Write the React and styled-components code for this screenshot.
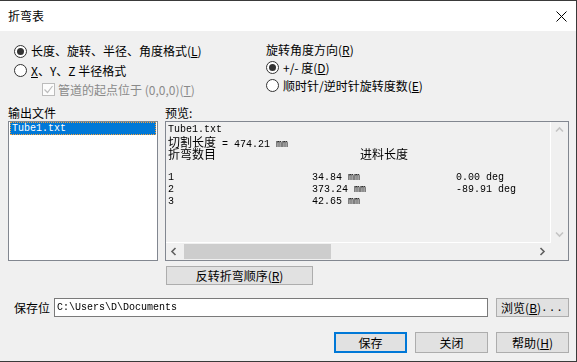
import React from "react";
import styled, { createGlobalStyle } from "styled-components";

const Global = createGlobalStyle`
  html, body { margin: 0; padding: 0; background: #ffffff; }
  body { font-family: "Noto Sans CJK SC", "Noto Sans", sans-serif; font-size: 12px; color: #000; }
  * { box-sizing: border-box; }
`;

const Window = styled.div`
  width: 577px;
  height: 362px;
  background: #f0f0f0;
  border-top: 1px solid #3a3a3a;
  border-right: 1px solid #3a3a3a;
  border-bottom: 1px solid #3a3a3a;
  display: flex;
  flex-direction: column;
  overflow: hidden;
`;

const TitleBar = styled.div`
  height: 30px;
  flex: none;
  background: #ffffff;
  display: flex;
  align-items: center;
  justify-content: space-between;
  padding: 0 9px 0 8px;
`;

const TitleText = styled.span`
  font-size: 12px;
  line-height: 14px;
`;

const Body = styled.div`
  flex: 1;
  display: flex;
  flex-direction: column;
  padding: 10px 7px 0 8px;
`;

const Options = styled.div`
  display: flex;
  margin-left: 6px;
  height: 58px;
`;

const OptionColumn = styled.div`
  display: flex;
  flex-direction: column;
  width: ${(p) => p.$w || "auto"};
  flex: none;
`;

const OptionRow = styled.div`
  height: ${(p) => p.$h}px;
  display: flex;
  align-items: center;
  gap: ${(p) => (p.$gap != null ? p.$gap : 4)}px;
  padding-left: ${(p) => p.$indent || 0}px;
  white-space: nowrap;
  line-height: 14px;
  color: ${(p) => (p.$disabled ? "#8a8a8a" : "#000")};
`;

const RadioMark = styled.span`
  flex: none;
  width: 13px;
  height: 13px;
  border-radius: 50%;
  border: 1px solid #333333;
  background: #ffffff;
  display: grid;
  place-items: center;
  &::after {
    content: "";
    width: 7px;
    height: 7px;
    border-radius: 50%;
    background: ${(p) => (p.$checked ? "#333333" : "transparent")};
  }
`;

const CheckMark = styled.span`
  flex: none;
  width: 13px;
  height: 13px;
  border: 1px solid #bcbcbc;
  background: #fcfcfc;
  display: grid;
  place-items: center;
`;

const Accel = styled.span`
  text-decoration: underline;
  text-underline-offset: 1px;
`;

const Panels = styled.div`
  display: grid;
  grid-template-columns: 150px 1fr;
  column-gap: 7px;
  margin-top: 5px;
`;

const PanelLabel = styled.div`
  height: 17px;
  line-height: 14px;
  display: flex;
  align-items: center;
`;

const ListBox = styled.div`
  height: 140px;
  border: 1px solid #828790;
  background: #ffffff;
  padding: 0 1px;
`;

const ListItem = styled.div`
  height: 13px;
  font-family: "Liberation Mono", monospace;
  font-size: 10px;
  line-height: 11px;
  padding-left: 1px;
  color: ${(p) => (p.$selected ? "#ffffff" : "#000")};
  background: ${(p) => (p.$selected ? "#0078d7" : "transparent")};
  border: 1px dotted ${(p) => (p.$selected ? "#f7a23c" : "transparent")};
`;

const PreviewBox = styled.div`
  height: 140px;
  border: 1px solid #828790;
  background: #f0f0f0;
  display: grid;
  grid-template-columns: 1fr 17px;
  grid-template-rows: 1fr 17px;
`;

const PreviewText = styled.div`
  border-right: 1px solid #ffffff;
  border-bottom: 1px solid #ffffff;
  padding: 2px 0 0 2px;
  overflow: hidden;
  font-family: "Liberation Mono", monospace;
  font-size: 10px;
  tab-size: 8;
  -moz-tab-size: 8;
  filter: grayscale(1);
`;

const Line = styled.div`
  height: 12px;
  line-height: 12px;
  white-space: pre;
`;

const Han = styled.span`
  font-family: "Noto Sans CJK SC", sans-serif;
  font-size: 12px;
  line-height: 12px;
`;

const VScroll = styled.div`
  display: flex;
  flex-direction: column;
  justify-content: space-between;
  background: #f0f0f0;
`;

const HScroll = styled.div`
  display: flex;
  align-items: stretch;
  background: #f0f0f0;
`;

const Arrow = styled.div`
  width: 17px;
  height: 17px;
  flex: none;
  display: grid;
  place-items: center;
`;

const Track = styled.div`
  flex: 1;
  display: flex;
  align-items: center;
  padding: 0 1px;
`;

const Thumb = styled.div`
  width: 147px;
  height: 15px;
  background: #cdcdcd;
`;

const Corner = styled.div`
  background: #f0f0f0;
`;

const Button = styled.button`
  width: ${(p) => p.$w}px;
  height: ${(p) => p.$h || 21}px;
  margin: 0;
  padding: 0;
  background: #e1e1e1;
  border: ${(p) => (p.$default ? "2px solid #0078d7" : "1px solid #adadad")};
  font-family: "Noto Sans CJK SC", sans-serif;
  font-size: 12px;
  line-height: 14px;
  color: #000;
  display: flex;
  align-items: center;
  justify-content: center;
  white-space: nowrap;
`;

const ReverseRow = styled.div`
  display: grid;
  grid-template-columns: 150px 1fr;
  column-gap: 7px;
  margin-top: 5px;
`;

const ReverseCell = styled.div`
  grid-column: 2;
  padding-left: 1px;
`;

const SaveRow = styled.div`
  display: flex;
  align-items: center;
  margin-top: 13px;
  padding-left: 6px;
  height: 19px;
`;

const PathLabel = styled.span`
  width: 40px;
  flex: none;
  line-height: 14px;
`;

const PathInput = styled.div`
  width: 434px;
  height: 19px;
  border: 1px solid #7a7a7a;
  background: #ffffff;
  font-family: "Liberation Mono", monospace;
  font-size: 10px;
  line-height: 17px;
  padding-left: 2px;
  white-space: pre;
  filter: grayscale(1);
`;

const BrowseWrap = styled.div`
  margin-left: auto;
`;

const Footer = styled.div`
  display: flex;
  justify-content: flex-end;
  gap: 8px;
  margin-top: 15px;
`;

const Dots = styled.span`
  letter-spacing: 1px;
  font-family: "Liberation Mono", monospace;
  font-size: 11px;
`;

const Chevron = ({ dir, color }) => {
  const paths = {
    up: "M1 5.5 L4.5 2 L8 5.5",
    down: "M1 2.5 L4.5 6 L8 2.5",
    left: "M5.5 1 L2 4.5 L5.5 8",
    right: "M2.5 1 L6 4.5 L2.5 8",
  };
  return (
    <svg width="9" height="9" viewBox="0 0 9 9">
      <path d={paths[dir]} fill="none" stroke={color} strokeWidth="1.6" />
    </svg>
  );
};

export default function App() {
  return (
    <>
      <Global />
      <Window>
        <TitleBar>
          <TitleText>折弯表</TitleText>
          <svg width="11" height="11" viewBox="0 0 11 11">
            <path d="M0.5 0.5 L10.5 10.5 M10.5 0.5 L0.5 10.5" stroke="#000" strokeWidth="1" />
          </svg>
        </TitleBar>
        <Body>
          <Options>
            <OptionColumn $w="252px">
              <OptionRow $h={20}>
                <RadioMark $checked />
                <span>
                  长度、旋转、半径、角度格式(<Accel>L</Accel>)
                </span>
              </OptionRow>
              <OptionRow $h={19}>
                <RadioMark />
                <span>
                  <Accel>X</Accel>、Y、Z 半径格式
                </span>
              </OptionRow>
              <OptionRow $h={19} $indent={28} $gap={3} $disabled>
                <CheckMark>
                  <svg width="11" height="11" viewBox="0 0 11 11">
                    <path d="M1.5 5.5 L4.5 8.5 L9.5 2" fill="none" stroke="#bcbcbc" strokeWidth="1.2" />
                  </svg>
                </CheckMark>
                <span>
                  管道的起点位于 (0,0,0)(<Accel>T</Accel>)
                </span>
              </OptionRow>
            </OptionColumn>
            <OptionColumn>
              <OptionRow $h={18}>
                <span>
                  旋转角度方向(<Accel>R</Accel>)
                </span>
              </OptionRow>
              <OptionRow $h={17}>
                <RadioMark $checked />
                <span>
                  +/- 度(<Accel>D</Accel>)
                </span>
              </OptionRow>
              <OptionRow $h={19}>
                <RadioMark />
                <span>
                  顺时针/逆时针旋转度数(<Accel>E</Accel>)
                </span>
              </OptionRow>
            </OptionColumn>
          </Options>

          <Panels>
            <PanelLabel>输出文件</PanelLabel>
            <PanelLabel>预览:</PanelLabel>
            <ListBox>
              <ListItem $selected>Tube1.txt</ListItem>
            </ListBox>
            <PreviewBox>
              <PreviewText>
                <Line>Tube1.txt</Line>
                <Line>
                  <Han>切割长度</Han> = 474.21 mm
                </Line>
                <Line>
                  <Han>折弯数目</Han>{"\t\t\t"}
                  <Han>进料长度</Han>
                </Line>
                <Line> </Line>
                <Line>{"1\t\t\t34.84 mm\t\t0.00 deg"}</Line>
                <Line>{"2\t\t\t373.24 mm\t\t-89.91 deg"}</Line>
                <Line>{"3\t\t\t42.65 mm"}</Line>
              </PreviewText>
              <VScroll>
                <Arrow>
                  <Chevron dir="up" color="#c4c4c4" />
                </Arrow>
                <Arrow>
                  <Chevron dir="down" color="#c4c4c4" />
                </Arrow>
              </VScroll>
              <HScroll>
                <Arrow>
                  <Chevron dir="left" color="#606060" />
                </Arrow>
                <Track>
                  <Thumb />
                </Track>
                <Arrow>
                  <Chevron dir="right" color="#606060" />
                </Arrow>
              </HScroll>
              <Corner />
            </PreviewBox>
          </Panels>

          <ReverseRow>
            <ReverseCell>
              <Button $w={147} $h={19}>
                反转折弯顺序(<Accel>R</Accel>)
              </Button>
            </ReverseCell>
          </ReverseRow>

          <SaveRow>
            <PathLabel>保存位</PathLabel>
            <PathInput>C:\Users\D\Documents</PathInput>
            <BrowseWrap>
              <Button $w={73} $h={19}>
                浏览(<Accel>B</Accel>)<Dots>...</Dots>
              </Button>
            </BrowseWrap>
          </SaveRow>

          <Footer>
            <Button $w={73} $default>
              保存
            </Button>
            <Button $w={73}>关闭</Button>
            <Button $w={73}>
              帮助(<Accel>H</Accel>)
            </Button>
          </Footer>
        </Body>
      </Window>
    </>
  );
}
